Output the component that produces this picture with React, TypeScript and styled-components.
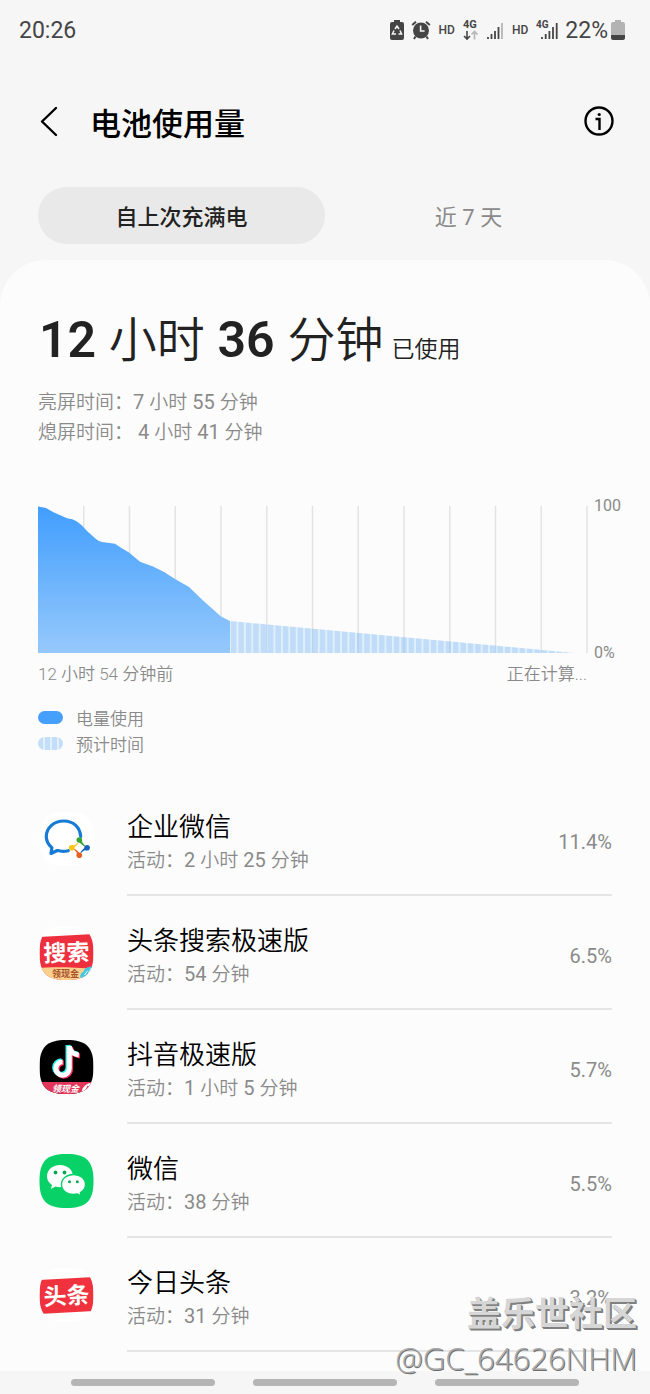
import React from 'react';
import styled, { createGlobalStyle } from 'styled-components';

const GlobalStyle = createGlobalStyle`
  *, *::before, *::after { box-sizing: border-box; }
  body {
    margin: 0;
    background: #f6f6f6;
    color: #222;
    font-family: Roboto, "Noto Sans CJK SC", sans-serif;
  }
  button {
    margin: 0;
    padding: 0;
    border: 0;
    background: none;
    color: inherit;
    font: inherit;
    cursor: pointer;
  }
  svg { display: block; }
`;

const Page = styled.div`
  position: relative;
  display: flex;
  flex-direction: column;
  min-height: 100vh;
`;

const StatusBar = styled.div`
  display: flex;
  align-items: center;
  justify-content: space-between;
  height: 60px;
  padding: 0 25px 0 19px;
  color: #454545;
  font-size: 23px;
`;

const StatusIcons = styled.div`
  display: flex;
  align-items: center;
  gap: 7px;
`;

const HdLabel = styled.span`
  padding: 0 1px;
  font-size: 12px;
  font-weight: 500;
`;

const BatteryLevel = styled.div`
  display: flex;
  align-items: center;
  gap: 3px;
`;

const Header = styled.header`
  display: flex;
  align-items: center;
  height: 122px;
  padding: 0 35px 0 36px;
  color: #000;
`;

const Title = styled.h1`
  flex: 1;
  margin: 0 0 0 26px;
  padding-top: 8px;
  font-size: 31px;
  font-weight: 500;
  line-height: 44px;
`;

const Tabs = styled.div`
  display: flex;
  padding: 5px 38px 16px;
`;

const Tab = styled.button<{ $active?: boolean }>`
  flex: 1;
  height: 57px;
  padding-bottom: 2px;
  border-radius: 29px;
  background: ${(p) => (p.$active ? '#e9e9e9' : 'transparent')};
  color: ${(p) => (p.$active ? '#222' : '#8a8a8a')};
  font-size: 22px;
  font-weight: ${(p) => (p.$active ? 500 : 400)};
`;

const Card = styled.main`
  flex: 1;
  padding: 48px 0 18px;
  border-radius: 46px 46px 0 0;
  background: #fcfcfc;
`;

const Headline = styled.h2`
  height: 64px;
  margin: 0 38px;
  font-size: 48px;
  font-weight: 350;
  line-height: 64px;
  white-space: nowrap;
`;

const Figure = styled.strong`
  margin: 0 1px;
  font-size: 50px;
  font-weight: 600;
`;

const Suffix = styled.span`
  margin-left: 8px;
  font-size: 23px;
`;

const ScreenTimes = styled.div`
  margin: 15px 38px 59px;
  color: #8a8a8a;
  font-size: 19px;
  font-weight: 350;
  line-height: 30px;
  white-space: pre;
`;

const TimeLine = styled.div`
  height: 30px;
`;

const NumberRun = styled.span`
  font-size: 20px;
  font-weight: 400;
  white-space: pre;
`;

const ChartGrid = styled.section`
  display: grid;
  grid-template-columns: 1fr 56px;
  column-gap: 7px;
  padding-left: 38px;
  color: #8a8a8a;
  font-size: 16px;
`;

const Plot = styled.svg`
  width: 100%;
  height: 147px;
  overflow: visible;
`;

const YAxis = styled.div`
  display: flex;
  flex-direction: column;
  justify-content: space-between;
  margin: -10px 0;
  line-height: 20px;
`;

const XAxis = styled.div`
  display: flex;
  justify-content: space-between;
  margin-top: 9px;
  font-size: 17px;
  font-weight: 350;
  line-height: 24px;
`;

const Legend = styled.ul`
  margin: 18px 38px 26px;
  padding: 0;
  list-style: none;
  color: #8a8a8a;
  font-size: 17px;
  font-weight: 350;
`;

const LegendItem = styled.li`
  display: flex;
  align-items: center;
  gap: 13px;
  height: 26px;
`;

const Swatch = styled.span<{ $striped?: boolean }>`
  width: 25px;
  height: 13px;
  border-radius: 7px;
  background: ${(p) =>
    p.$striped
      ? 'repeating-linear-gradient(90deg, #c3def8 0 5px, #e3f0fc 5px 7px)'
      : '#469ffa'};
`;

const AppList = styled.ul`
  margin: 0;
  padding: 0 38px;
  list-style: none;
`;

const AppRow = styled.button`
  display: flex;
  align-items: center;
  gap: 32px;
  width: 100%;
  height: 114px;
  text-align: left;
`;

const AppBody = styled.span`
  display: flex;
  flex: 1;
  align-items: center;
  justify-content: space-between;
  height: 114px;
  padding-top: 8px;
  border-bottom: 2px solid #e5e5e5;
`;

const AppText = styled.span`
  display: flex;
  flex-direction: column;
`;

const AppName = styled.span`
  color: #000;
  font-size: 26px;
  font-weight: 350;
  line-height: 36px;
`;

const AppTime = styled.span`
  height: 30px;
  color: #8a8a8a;
  font-size: 19px;
  font-weight: 350;
  line-height: 30px;
`;

const Percent = styled.span`
  color: #8a8a8a;
  font-size: 20px;
`;

const NavBar = styled.nav`
  display: flex;
  align-items: center;
  gap: 38px;
  height: 23px;
  padding: 0 71px;
`;

const NavPill = styled.button`
  flex: 1;
  height: 7px;
  border-radius: 4px;
  background: #b5b5b5;
`;

const Watermark = styled.div`
  position: absolute;
  right: 13px;
  bottom: 14px;
  text-align: right;
  pointer-events: none;
`;

const WatermarkName = styled.div`
  color: #d6d6d6;
  font-size: 34px;
  font-weight: 700;
  line-height: 44px;
  text-shadow: 1px 1px 0 #808080, 2px 2px 0 #808080;
`;

const WatermarkUser = styled.div`
  color: #a8a8a8;
  font-family: "Open Sans", "Noto Sans", sans-serif;
  font-size: 31px;
  font-weight: 300;
  line-height: 44px;
  text-shadow: 1px 1px 0 #6e6e6e;
`;

/* Sets the figures of a duration slightly larger than the characters round them. */
const Duration = ({ text }: { text: string }) => (
  <>
    {text.split(/([\d ]+)/).map((part, i) =>
      i % 2 ? <NumberRun key={i}>{part}</NumberRun> : part,
    )}
  </>
);

const SQUIRCLE = 'M28 1C48 1 55 8 55 28S48 55 28 55 1 48 1 28 8 1 28 1Z';

const RecycleBattery = () => (
  <svg width="14" height="20" viewBox="0 0 14 20" aria-hidden="true">
    <path d="M4 0h6v2h2a2 2 0 0 1 2 2v14a2 2 0 0 1-2 2H2a2 2 0 0 1-2-2V4a2 2 0 0 1 2-2h2z" fill="#454545" />
    <path d="M5 9 7 6l2 3M10 10.500l1.600 3.500H8.500M6 14H2.400L4 10.500" fill="none" stroke="#f6f6f6" strokeWidth="1.500" />
  </svg>
);

const Alarm = () => (
  <svg width="20" height="20" viewBox="0 0 20 20" aria-hidden="true">
    <circle cx="10" cy="10.500" r="8" fill="#454545" />
    <path d="M1.200 5 5 1.800M18.800 5 15 1.800M4.500 16.500 3 19M15.500 16.500 17 19" stroke="#454545" strokeWidth="2" />
    <path d="M9.600 5.500v5.500h4" fill="none" stroke="#f6f6f6" strokeWidth="1.600" />
  </svg>
);

const FourGArrows = () => (
  <svg width="16" height="20" viewBox="0 0 16 20" overflow="visible" aria-hidden="true">
    <text x="0" y="8" fontSize="11" fontWeight="700" fill="#454545">4G</text>
    <path d="M4 11v8M1 16l3 3 3-3" fill="none" stroke="#454545" strokeWidth="1.600" />
    <path d="M11.500 19.500v-8M8.500 14.500l3-3 3 3" fill="none" stroke="#b5b5b5" strokeWidth="1.600" />
  </svg>
);

const Signal = () => (
  <svg width="18" height="18" viewBox="0 0 18 18" aria-hidden="true">
    <path d="M2 18v-2M5.500 18v-5M9 18v-8M12.500 18V6" stroke="#454545" strokeWidth="1.800" />
    <path d="M16 18V2" stroke="#b5b5b5" strokeWidth="1.800" />
  </svg>
);

const FourGSignal = () => (
  <svg width="22" height="20" viewBox="0 0 22 20" overflow="visible" aria-hidden="true">
    <text x="0" y="8" fontSize="10" fontWeight="700" fill="#454545">4G</text>
    <path d="M6 19v-2M9.700 19v-5M13.400 19v-8M17 19V7M20.700 19V3" stroke="#454545" strokeWidth="1.800" />
  </svg>
);

const BatteryGauge = () => (
  <svg width="14" height="20" viewBox="0 0 14 20" aria-hidden="true">
    <path d="M4 0h6v2h2a2 2 0 0 1 2 2v11H0V4a2 2 0 0 1 2-2h2z" fill="#b3b3b3" />
    <path d="M0 15h14v3a2 2 0 0 1-2 2H2a2 2 0 0 1-2-2z" fill="#454545" />
  </svg>
);

const WeComIcon = () => (
  <svg width="57" height="56" viewBox="0 0 56 56" aria-hidden="true">
    <path d={SQUIRCLE} fill="#fff" />
    <path d="M42.200 25.500C41.500 16 34.500 10 25.500 10 15 10 7.800 17 7.800 25.500c0 5 2.200 8.400 5.600 11.200L12.500 42.500l6.300-3c3.800 1 7.500 1 11 .2" fill="none" stroke="#157bd6" strokeWidth="3.200" strokeLinejoin="round" strokeLinecap="round" />
    <path d="M38.700 28.200 43.300 28 43.800 31.500 46.500 34.500 45.800 35.500 42 32.500Z" fill="#38a334" />
    <path d="M48.800 34.200 49 39 45.600 39.500 42.500 42 41.800 41.300 44.700 38Z" fill="#1763bf" />
    <path d="M43 44.500 38.500 44.800 38.200 41.500 35.500 38.500 36.300 37.800 39.500 40.500Z" fill="#e8601f" />
    <path d="M33 39 32.700 34.500 36.300 34.200 39.300 31.500 40 32.300 37 35.500Z" fill="#f9c514" />
    <circle cx="40.800" cy="29" r="2.800" fill="#38a334" />
    <circle cx="48.600" cy="36.800" r="2.800" fill="#1763bf" />
    <circle cx="40.800" cy="44.200" r="2.800" fill="#e8601f" />
    <circle cx="33.200" cy="36.800" r="2.800" fill="#f9c514" />
  </svg>
);

const SearchIcon = () => (
  <svg width="57" height="56" viewBox="0 0 56 56" aria-hidden="true">
    <clipPath id="search-clip"><path d={SQUIRCLE} /></clipPath>
    <path d={SQUIRCLE} fill="#fff" />
    <g clipPath="url(#search-clip)">
      <path d="M0 12 56 9v47H0z" fill="#ee2f3d" />
      <path d="M0 43c10-1.500 38-1 56 1v12H0z" fill="#fad08c" />
      <path d="M42 53c-1-3 1-6 3-6 0-3 3-5 10-6v9l-8 6z" fill="#43c8e4" />
      <path d="m46 50 3-4M50 48l3-5" stroke="#fff" strokeWidth="1" />
      <text x="28" y="36" textAnchor="middle" fontSize="23" fontWeight="700" fill="#fff" transform="rotate(-2 28 28)">搜索</text>
      <text x="27" y="52" textAnchor="middle" fontSize="9" fontWeight="700" fill="#a9522c">领现金</text>
    </g>
  </svg>
);

const NOTE = 'M31 6v22.500a6.700 6.700 0 1 1-6.700-6.700M31 6c.5 5 4 8.500 9.500 9';

const DouyinIcon = () => (
  <svg width="57" height="56" viewBox="0 0 56 56" aria-hidden="true">
    <clipPath id="douyin-clip"><path d={SQUIRCLE} /></clipPath>
    <g clipPath="url(#douyin-clip)">
      <path d="M0 0h56v56H0z" fill="#000" />
      <g fill="none" strokeWidth="5">
        <path d={NOTE} stroke="#fe2c55" transform="translate(1 2)" />
        <path d={NOTE} stroke="#25f4ee" transform="translate(-1.500 0)" />
        <path d={NOTE} stroke="#fff" transform="translate(-0.200 1)" />
      </g>
      <path d="M0 43h56v13H0z" fill="#e3365a" />
      <path d="M43 54c0-4 3-9 9-10l2 2-3 8z" fill="#fff" />
      <path d="m47 53 3-6" stroke="#e3365a" strokeWidth="2" />
      <text x="27" y="53" textAnchor="middle" fontSize="9" fontWeight="700" fontStyle="italic" fill="#fff">领现金</text>
    </g>
  </svg>
);

const WeChatIcon = () => (
  <svg width="57" height="56" viewBox="0 0 56 56" aria-hidden="true">
    <path d={SQUIRCLE} fill="#07d167" />
    <path d="M21.500 12C13.800 12 8.500 17 8.500 23.300c0 3.700 1.900 6.700 5 8.700l-1.200 4 4.800-2.400c1.400.4 2.800.6 4.400.6 7.700 0 13-4.700 13-10.900S29.200 12 21.500 12z" fill="#fff" />
    <path d="M35 21.500c-6.800 0-12 4.200-12 10s5.200 10 12 10c1.400 0 2.700-.2 3.900-.5l4 2.200-1-3.500c3.100-1.900 5.100-4.700 5.100-8.200 0-5.800-5.200-10-12-10z" fill="#fff" stroke="#07d167" strokeWidth="1.400" />
    <g fill="#08a955">
      <circle cx="17" cy="19.500" r="1.900" />
      <circle cx="26" cy="19.500" r="1.900" />
      <circle cx="31" cy="28.800" r="1.500" />
      <circle cx="38.800" cy="28.800" r="1.500" />
    </g>
  </svg>
);

const ToutiaoIcon = () => (
  <svg width="57" height="56" viewBox="0 0 56 56" aria-hidden="true">
    <clipPath id="toutiao-clip"><path d={SQUIRCLE} /></clipPath>
    <path d={SQUIRCLE} fill="#fff" />
    <g clipPath="url(#toutiao-clip)">
      <path d="M0 13 56 10v34L0 47z" fill="#ef323d" />
      <text x="28" y="37" textAnchor="middle" fontSize="23" fontWeight="700" fill="#fff" transform="rotate(-3 28 28)">头条</text>
    </g>
  </svg>
);

const apps = [
  { name: '企业微信', time: '2 小时 25 分钟', percent: '11.4%', Icon: WeComIcon },
  { name: '头条搜索极速版', time: '54 分钟', percent: '6.5%', Icon: SearchIcon },
  { name: '抖音极速版', time: '1 小时 5 分钟', percent: '5.7%', Icon: DouyinIcon },
  { name: '微信', time: '38 分钟', percent: '5.5%', Icon: WeChatIcon },
  { name: '今日头条', time: '31 分钟', percent: '3.2%', Icon: ToutiaoIcon },
];

const gridLines = Array.from({ length: 12 }, (_, i) => ((i + 1) * 549) / 12);

const BatteryPlot = () => (
  <Plot viewBox="0 0 549 147" preserveAspectRatio="none" role="img" aria-label="电量使用">
    <defs>
      <linearGradient id="used" x1="0" y1="0" x2="0" y2="1">
        <stop offset="0" stopColor="#419efd" />
        <stop offset="1" stopColor="#96c9fc" />
      </linearGradient>
      <pattern id="stripes" x="193" width="7.400" height="147" patternUnits="userSpaceOnUse">
        <path d="M0 0h7.400v147H0z" fill="#e0effc" />
        <path d="M0 0h5.500v147H0z" fill="#c0dcf8" />
      </pattern>
    </defs>
    {gridLines.map((x) => (
      <path key={x} d={`M${x} 0V147`} stroke="#e3e3e3" strokeWidth="1.500" />
    ))}
    <path d="M192 115 536 147H192z" fill="url(#stripes)" />
    {gridLines.slice(4, 11).map((x) => (
      <path key={x} d={`M${x} ${115 + ((x - 192) * 32) / 344}V147`} stroke="#a9c9e8" strokeOpacity="0.600" strokeWidth="1.500" />
    ))}
    <path
      d="M0 0.500 8 2 15 6 29 12.300Q35 13 38 15 42 17 49 25L58 33Q61 35.500 64 36L77 37.700 83 41.700 91 46.500 102 55.700 115 60.500 126 66 137 73 151 81 165 94.500 183 110.500 192 115V147H0z"
      fill="url(#used)"
    />
  </Plot>
);

export default function App() {
  return (
    <Page>
      <GlobalStyle />
      <StatusBar>
        <span>20:26</span>
        <StatusIcons>
          <RecycleBattery />
          <Alarm />
          <HdLabel>HD</HdLabel>
          <FourGArrows />
          <Signal />
          <HdLabel>HD</HdLabel>
          <FourGSignal />
          <BatteryLevel>
            <span>22%</span>
            <BatteryGauge />
          </BatteryLevel>
        </StatusIcons>
      </StatusBar>

      <Header>
        <button aria-label="返回">
          <svg width="28" height="32" viewBox="0 0 28 32" fill="none" stroke="#000" strokeWidth="2.400" strokeLinecap="round" strokeLinejoin="round">
            <path d="M20 3 6 16.500 20 30" />
          </svg>
        </button>
        <Title>电池使用量</Title>
        <button aria-label="信息">
          <svg width="32" height="32" viewBox="0 0 32 32" fill="none" stroke="#000" strokeWidth="2.400">
            <circle cx="16" cy="16" r="13.500" />
            <path d="M12.500 14h4v11" />
            <circle cx="16.200" cy="9.500" r="1.600" fill="#000" stroke="none" />
          </svg>
        </button>
      </Header>

      <Tabs role="tablist">
        <Tab role="tab" aria-selected="true" $active>自上次充满电</Tab>
        <Tab role="tab" aria-selected="false">近 7 天</Tab>
      </Tabs>

      <Card>
        <Headline>
          <Figure>12</Figure> 小时 <Figure>36</Figure> 分钟<Suffix>已使用</Suffix>
        </Headline>
        <ScreenTimes>
          <TimeLine><Duration text="亮屏时间：7 小时 55 分钟" /></TimeLine>
          <TimeLine><Duration text="熄屏时间： 4 小时 41 分钟" /></TimeLine>
        </ScreenTimes>

        <ChartGrid>
          <BatteryPlot />
          <YAxis>
            <span>100</span>
            <span>0%</span>
          </YAxis>
          <XAxis>
            <span>12 小时 54 分钟前</span>
            <span>正在计算...</span>
          </XAxis>
        </ChartGrid>

        <Legend>
          <LegendItem><Swatch />电量使用</LegendItem>
          <LegendItem><Swatch $striped />预计时间</LegendItem>
        </Legend>

        <AppList>
          {apps.map(({ name, time, percent, Icon }) => (
            <li key={name}>
              <AppRow>
                <Icon />
                <AppBody>
                  <AppText>
                    <AppName>{name}</AppName>
                    <AppTime><Duration text={`活动：${time}`} /></AppTime>
                  </AppText>
                  <Percent>{percent}</Percent>
                </AppBody>
              </AppRow>
            </li>
          ))}
        </AppList>
      </Card>

      <NavBar>
        <NavPill aria-label="最近任务" />
        <NavPill aria-label="主屏幕" />
        <NavPill aria-label="返回上一页" />
      </NavBar>

      <Watermark>
        <WatermarkName>盖乐世社区</WatermarkName>
        <WatermarkUser>@GC_64626NHM</WatermarkUser>
      </Watermark>
    </Page>
  );
}
